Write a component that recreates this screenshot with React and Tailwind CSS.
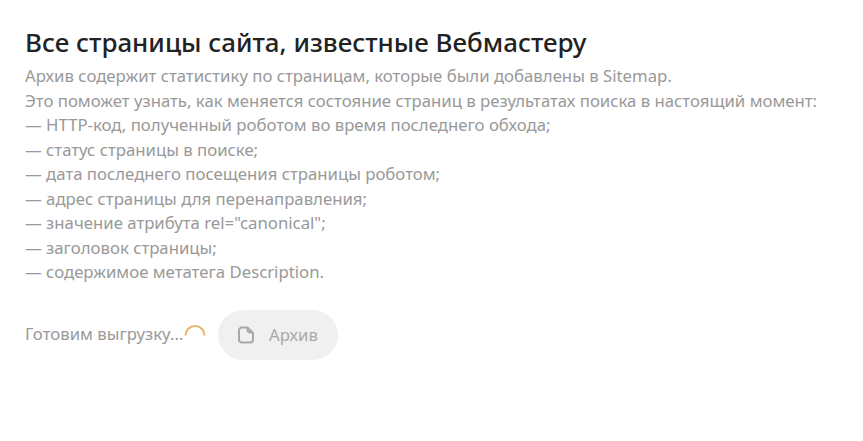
const lines = [
  "Архив содержит статистику по страницам, которые были добавлены в Sitemap.",
  "Это поможет узнать, как меняется состояние страниц в результатах поиска в настоящий момент:",
  "— HTTP-код, полученный роботом во время последнего обхода;",
  "— статус страницы в поиске;",
  "— дата последнего посещения страницы роботом;",
  "— адрес страницы для перенаправления;",
  '— значение атрибута rel="canonical";',
  "— заголовок страницы;",
  "— содержимое метатега Description.",
];

export default function App() {
  return (
    <div className="min-h-[441px] bg-white px-[25px] pt-[26px] font-['Noto_Sans',sans-serif]">
      <h1 className="text-[25.95px] leading-[32px] font-medium whitespace-nowrap text-[#222]">Все страницы сайта, известные Вебмастеру</h1>
      <div className="mt-[6px] text-[16.75px] leading-[24.5px] whitespace-nowrap text-[#999]">
        {lines.map((l) => (
          <div key={l}>{l}</div>
        ))}
      </div>
      <div className="mt-[25px] flex items-center text-[16.75px] text-[#999]">
        <span className="mb-[1px] w-[159px] whitespace-nowrap">Готовим выгрузку...</span>
        <svg width="22" height="22" viewBox="0 0 22 22" className="mb-[4px]">
          <path d="M1.5 13.5 A9.5 9.5 0 0 1 20.5 13.5" fill="none" stroke="#e8b566" strokeWidth="2" />
        </svg>
        <div className="ml-[12px] flex h-[50px] w-[120px] items-center gap-[14px] rounded-[25px] bg-[#f0f0f0] pl-[19px] text-[#aaa]">
          <svg width="18" height="18" viewBox="0 0 18 18" fill="none" stroke="#a8a8a8" strokeWidth="2">
            <path d="M5 1.5 h5.5 L16 7 V13.5 a3 3 0 0 1 -3 3 H5 a3 3 0 0 1 -3 -3 V4.5 a3 3 0 0 1 3 -3z" strokeLinejoin="round" />
            <path d="M10.5 2 v1.5 a3 3 0 0 0 3 3 h2" />
          </svg>
          <span>Архив</span>
        </div>
      </div>
    </div>
  );
}
